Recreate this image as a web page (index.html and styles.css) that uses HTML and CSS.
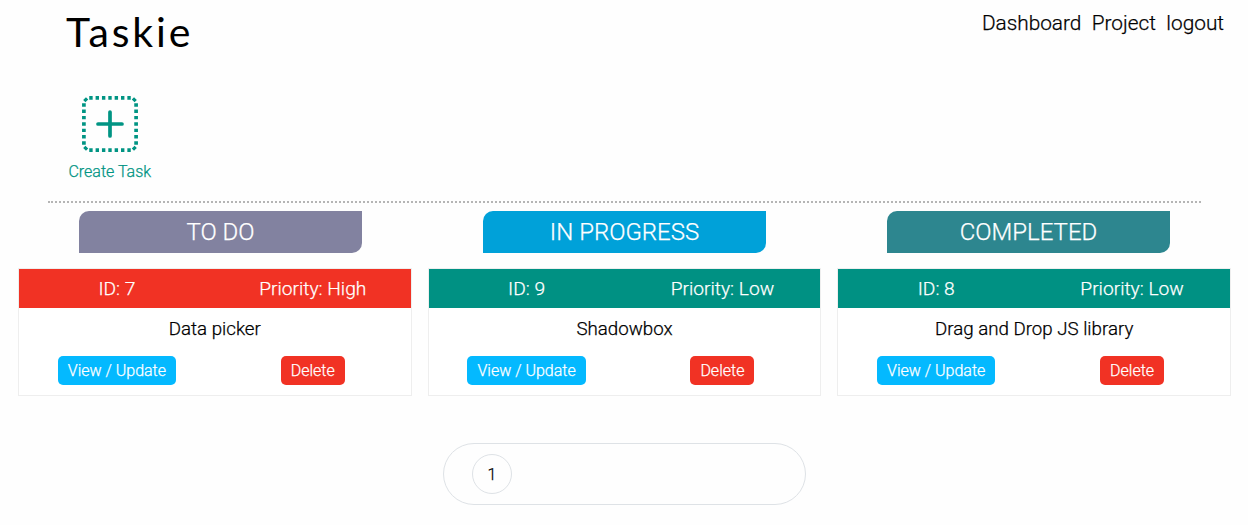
FILE: index.html
```
<!DOCTYPE html>
<html lang="en">
<head>
<meta charset="utf-8">
<title>Taskie</title>
<link rel="stylesheet" href="styles.css">
</head>
<body>
<header class="header">
  <h1 class="logo">Taskie</h1>
  <nav class="nav"><a>Dashboard</a><a>Project</a><a>logout</a></nav>
</header>
<section class="toolbar">
  <a class="create">
    <svg class="create-icon" width="56" height="56" viewBox="0 0 56 56" fill="none" stroke="#009483" stroke-width="3.7">
      <path stroke-dasharray="3.4 2.95" d="M7.25 1.9H49M7.25 54.1H49M1.9 7.25V49M54.1 7.25V49"/>
      <path stroke-width="3.2" d="M2.3 5.1L5.1 2.3M50.9 2.3L53.7 5.1M53.7 50.9L50.9 53.7M5.1 53.7L2.3 50.9"/>
      <path stroke-linecap="round" d="M28 16V40M16 28H40"/>
    </svg>
    <span class="create-label">Create Task</span>
  </a>
</section>
<div class="titles">
  <h2 class="title title-todo">TO DO</h2>
  <h2 class="title title-progress">IN PROGRESS</h2>
  <h2 class="title title-done">COMPLETED</h2>
</div>
<main class="board">
  <article class="card">
    <div class="card-head high"><span>ID: 7</span><span>Priority: High</span></div>
    <p class="card-name">Data picker</p>
    <div class="card-actions"><a class="btn view">View / Update</a><a class="btn delete">Delete</a></div>
  </article>
  <article class="card">
    <div class="card-head low"><span>ID: 9</span><span>Priority: Low</span></div>
    <p class="card-name">Shadowbox</p>
    <div class="card-actions"><a class="btn view">View / Update</a><a class="btn delete">Delete</a></div>
  </article>
  <article class="card">
    <div class="card-head low"><span>ID: 8</span><span>Priority: Low</span></div>
    <p class="card-name">Drag and Drop JS library</p>
    <div class="card-actions"><a class="btn view">View / Update</a><a class="btn delete">Delete</a></div>
  </article>
</main>
<div class="pagination"><a class="page">1</a></div>
</body>
</html>
```
FILE: styles.css
```
* { box-sizing: border-box; margin: 0; padding: 0; }
body { background: #fefefe; color: #000; font-family: Roboto, sans-serif; font-weight: 300; -webkit-text-stroke: 0.25px; overflow: hidden; }
.header { display: flex; justify-content: space-between; height: 96px; padding: 0 24px 0 66px; }
.logo { font: 400 41px/64px Lato, sans-serif; letter-spacing: 2.9px; -webkit-text-stroke: 0; }
.nav { display: flex; gap: 10.4px; font-size: 20.8px; line-height: 24px; padding-top: 11px; }
.toolbar { height: 107px; width: 1153px; margin-left: 48px; border-bottom: 2px dotted #b5b5b5; }
.create { display: inline-flex; flex-direction: column; align-items: center; margin-left: 20.4px; color: #009483; }
.create-icon { display: block; }
.create-label { font-size: 16px; line-height: 20px; margin-top: 10px; }
.titles { display: flex; gap: 121px; padding: 8px 0 0 79px; }
.title { width: 283px; height: 42px; border-radius: 10px 0; color: #fff; font-size: 24px; font-weight: 300; line-height: 42px; text-align: center; }
.title-todo { background: #8282a0; }
.title-progress { background: #00a1d9; }
.title-done { background: #2d868f; }
.board { display: grid; grid-template-columns: repeat(3, 1fr); gap: 16px; margin: 15px 17px 0 18px; }
.card { height: 128px; border: 1px solid #eee; background: #fff; }
.card-head { display: grid; grid-template-columns: 1fr 1fr; height: 39px; line-height: 39px; color: #fff; font-size: 19.2px; text-align: center; }
.high { background: #f13224; }
.low { background: #009183; }
.card-name { font-size: 18.72px; line-height: 24px; margin-top: 9px; text-align: center; }
.card-actions { display: grid; grid-template-columns: 1fr 1fr; justify-items: center; margin-top: 15px; }
.btn { height: 29px; padding: 0 10px; border-radius: 5px; color: #fff; font-size: 16px; line-height: 29px; }
.view { background: #04b9ff; }
.delete { background: #f13224; }
.pagination { display: flex; align-items: center; width: 363px; height: 62px; margin: 47px 0 0 443px; padding-left: 28px; border: 1px solid #dee2e6; border-radius: 31px; }
.page { width: 40px; height: 40px; border: 1px solid #dee2e6; border-radius: 50%; font-size: 16px; line-height: 40px; text-align: center; }
```
